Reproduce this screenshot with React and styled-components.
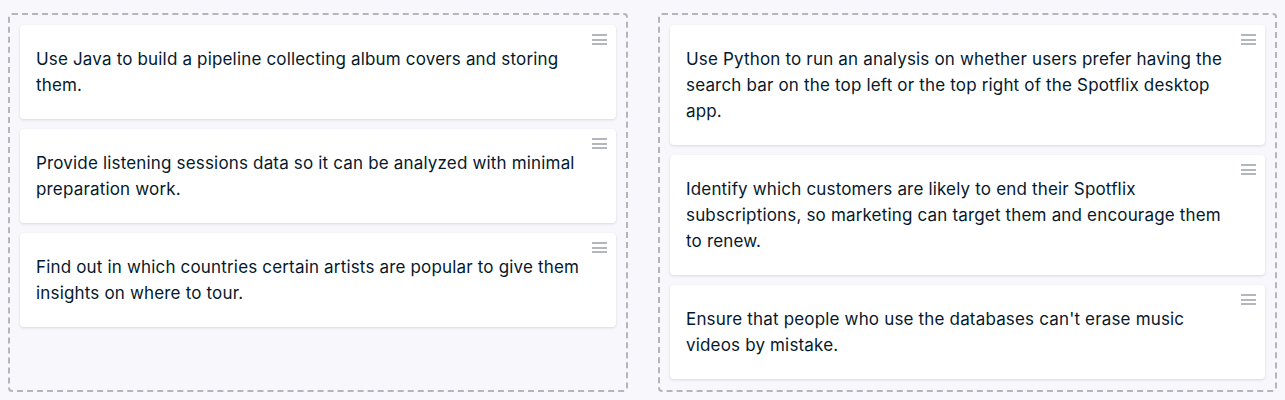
import React from 'react';
import styled, { createGlobalStyle } from 'styled-components';

const GlobalStyle = createGlobalStyle`
  body {
    margin: 0;
    background: #f7f7fc;
    font-family: "Inter", "Noto Sans", sans-serif;
    color: #05192d;
  }
`;

const Board = styled.div`
  display: grid;
  grid-template-columns: 620px 619px;
  column-gap: 30px;
  padding: 13px 8px 8px;
  height: 400px;
  box-sizing: border-box;
`;

const Column = styled.div`
  display: flex;
  flex-direction: column;
  gap: 10px;
  padding: 10px;
  border: 2px dashed #b4b6bd;
  border-radius: 4px;
`;

const Card = styled.div`
  position: relative;
  background: #ffffff;
  border-radius: 4px;
  box-shadow: 0 1px 3px rgba(5, 25, 45, 0.13);
  padding: 21px 31px 21px 16px;
  font-size: 17px;
  letter-spacing: 0.17px;
  line-height: 26px;
`;

const Handle = styled.div`
  position: absolute;
  top: 9px;
  right: 9px;
  width: 15px;
  display: flex;
  flex-direction: column;
  gap: 2.5px;

  span {
    display: block;
    height: 2px;
    background: #b4b6bd;
  }
`;

const left = [
  'Use Java to build a pipeline collecting album covers and storing them.',
  'Provide listening sessions data so it can be analyzed with minimal preparation work.',
  'Find out in which countries certain artists are popular to give them insights on where to tour.',
];

const right = [
  'Use Python to run an analysis on whether users prefer having the search bar on the top left or the top right of the Spotflix desktop app.',
  'Identify which customers are likely to end their Spotflix subscriptions, so marketing can target them and encourage them to renew.',
  "Ensure that people who use the databases can't erase music videos by mistake.",
];

const Item = ({ text }) => (
  <Card>
    <Handle><span /><span /><span /></Handle>
    {text}
  </Card>
);

export default function App() {
  return (
    <>
      <GlobalStyle />
      <Board>
        <Column>{left.map((t) => <Item key={t} text={t} />)}</Column>
        <Column>{right.map((t) => <Item key={t} text={t} />)}</Column>
      </Board>
    </>
  );
}
